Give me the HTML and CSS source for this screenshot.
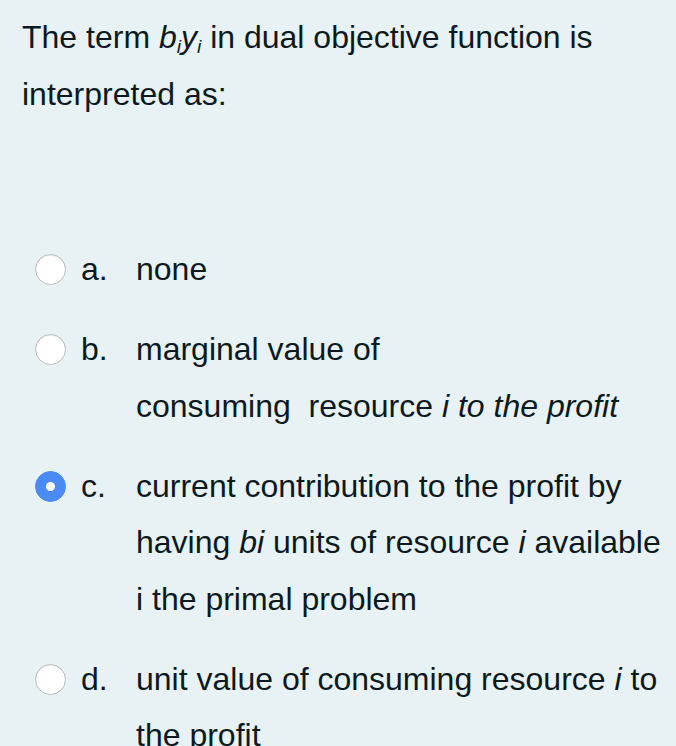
FILE: index.html
```html
<!DOCTYPE html>
<html>
<head>
<meta charset="utf-8">
<link rel="stylesheet" href="styles.css">
</head>
<body>
<div class="question">
  <div class="qtext">The term <i>b<sub>i</sub>y<sub>i</sub></i> in dual objective function is<br>interpreted as:</div>
  <div class="answers">
    <div class="option">
      <span class="radio"></span>
      <span class="letter">a.</span>
      <span class="text">none</span>
    </div>
    <div class="option">
      <span class="radio"></span>
      <span class="letter">b.</span>
      <span class="text">marginal value of<br>consuming&nbsp; resource <i>i to the profit</i></span>
    </div>
    <div class="option">
      <span class="radio checked"></span>
      <span class="letter">c.</span>
      <span class="text">current contribution to the profit by<br>having <i>bi</i> units of resource <i>i</i> available<br>i the primal problem</span>
    </div>
    <div class="option">
      <span class="radio"></span>
      <span class="letter">d.</span>
      <span class="text">unit value of consuming resource <i>i</i> to<br>the profit</span>
    </div>
  </div>
</div>
</body>
</html>
```
FILE: styles.css
```css
html, body {
  margin: 0;
  padding: 0;
  background: #e8f1f4;
}
body {
  font-family: "Liberation Sans", Arial, sans-serif;
  font-size: 32px;
  color: #0c1a1f;
  height: 746px;
  overflow: hidden;
}
.question {
  padding: 9px 0 0 22px;
}
.qtext {
  line-height: 57px;
}
.qtext sub {
  font-size: 0.6em;
  vertical-align: -0.25em;
  line-height: 0;
}
.answers {
  margin-top: 118px;
  display: flex;
  flex-direction: column;
  gap: 23.5px;
}
.option {
  display: flex;
  align-items: flex-start;
  line-height: 56.5px;
}
.radio {
  width: 29px;
  height: 29px;
  margin: 13px 0 0 13px;
  border-radius: 50%;
  border: 1px solid #b9bcbe;
  background: #ffffff;
  box-shadow: inset 0 1px 1px rgba(0,0,0,0.08);
  flex: none;
  box-sizing: content-box;
}
.radio.checked {
  border-color: #4a8af4;
  background: #4a8af4;
  position: relative;
  box-shadow: none;
}
.radio.checked::after {
  content: "";
  position: absolute;
  left: 10px;
  top: 10px;
  width: 9px;
  height: 9px;
  border-radius: 50%;
  background: #fff;
}
.letter {
  width: 55px;
  margin-left: 15px;
  flex: none;
}
.text {
  flex: 1;
}
```
